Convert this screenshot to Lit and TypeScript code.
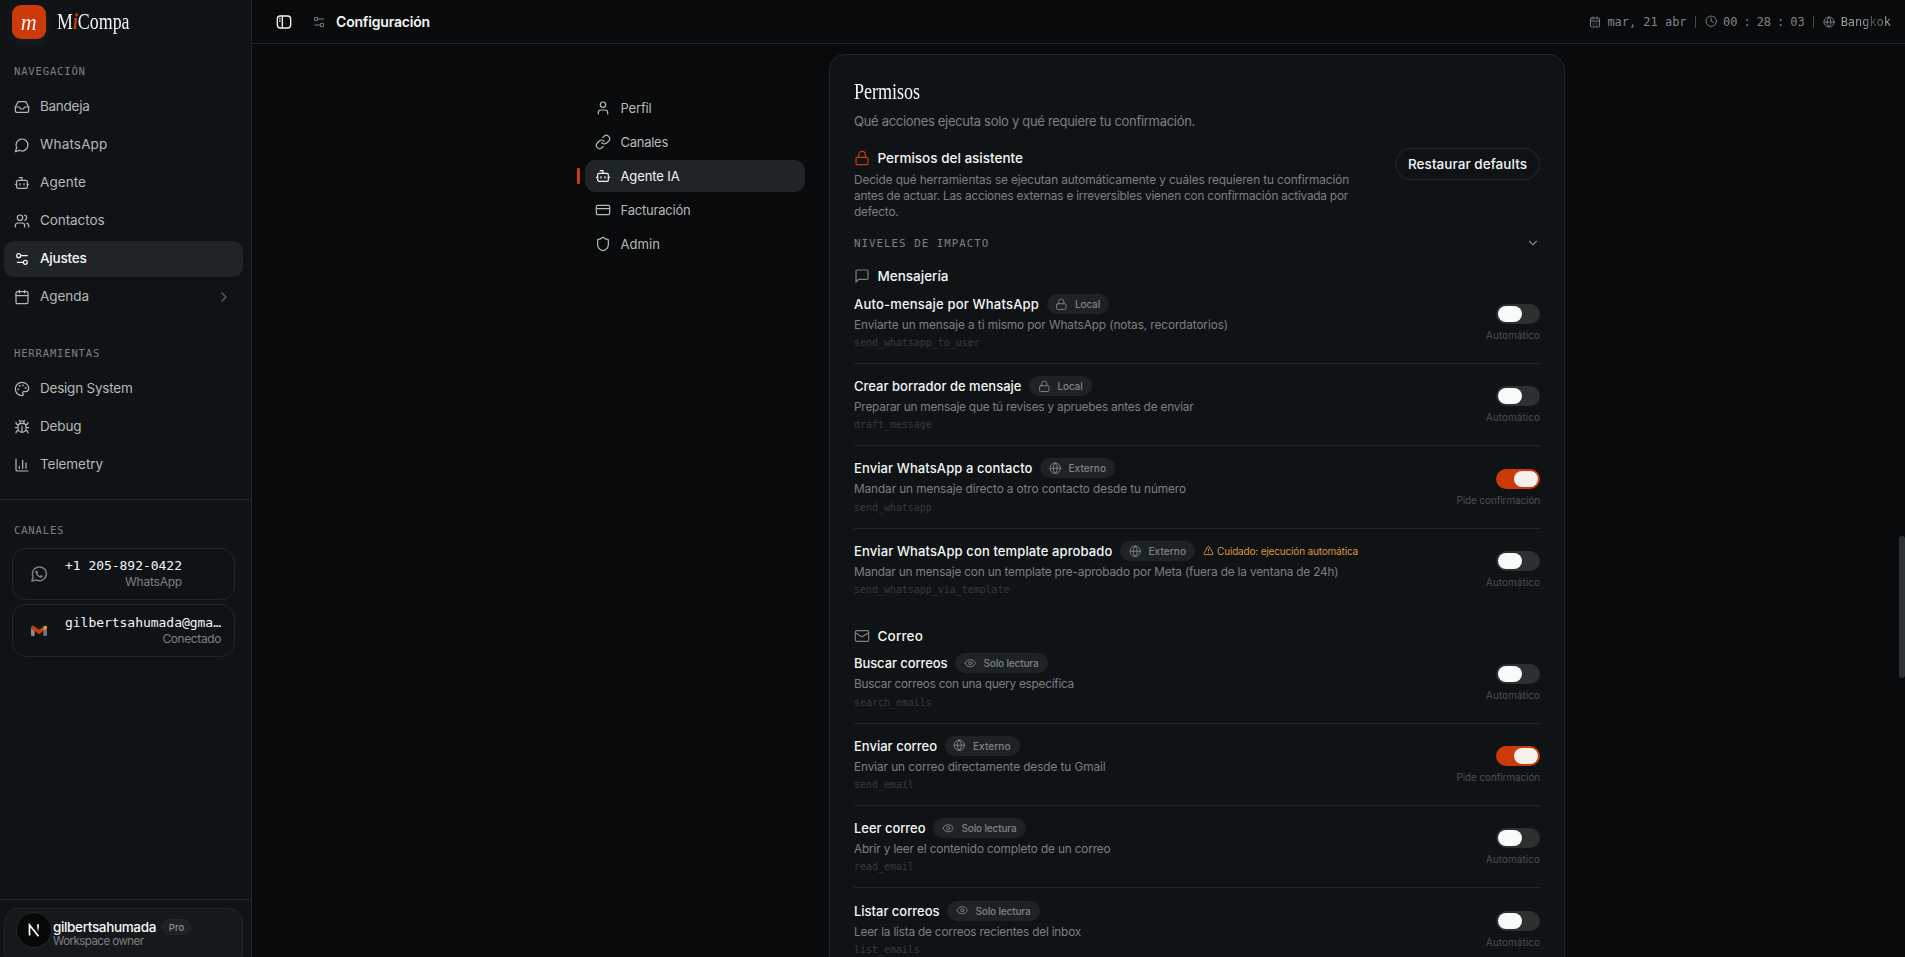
import { LitElement, html, css, svg, nothing } from 'lit';
import { customElement, property } from 'lit/decorators.js';

const icons: Record<string, unknown> = {
  inbox: svg`<path d="M22 12h-6l-2 3h-4l-2-3H2"/><path d="M5.45 5.11 2 12v6a2 2 0 0 0 2 2h16a2 2 0 0 0 2-2v-6l-3.45-6.89A2 2 0 0 0 16.76 4H7.24a2 2 0 0 0-1.79 1.11z"/>`,
  chat: svg`<path d="M7.9 20A9 9 0 1 0 4 16.1L2 22Z"/>`,
  bot: svg`<path d="M12 8V4H8"/><rect width="16" height="12" x="4" y="8" rx="2"/><path d="M2 14h2M20 14h2M15 13v2M9 13v2"/>`,
  users: svg`<path d="M16 21v-2a4 4 0 0 0-4-4H6a4 4 0 0 0-4 4v2"/><circle cx="9" cy="7" r="4"/><path d="M22 21v-2a4 4 0 0 0-3-3.87M16 3.13a4 4 0 0 1 0 7.75"/>`,
  sliders: svg`<path d="M20 7h-9M14 17H5"/><circle cx="17" cy="17" r="3"/><circle cx="7" cy="7" r="3"/>`,
  calendar: svg`<path d="M8 2v4M16 2v4M3 10h18"/><rect width="18" height="18" x="3" y="4" rx="2"/>`,
  calendarDays: svg`<path d="M8 2v4M16 2v4M3 10h18M8 14h.01M12 14h.01M16 14h.01M8 18h.01M12 18h.01M16 18h.01"/><rect width="18" height="18" x="3" y="4" rx="2"/>`,
  palette: svg`<path d="M12 22a1 1 0 0 1 0-20 10 9 0 0 1 10 9 5 5 0 0 1-5 5h-2.25a1.75 1.75 0 0 0-1.4 2.8l.3.4a1.75 1.75 0 0 1-1.4 2.8z"/><circle cx="13.5" cy="6.5" r=".5"/><circle cx="17.5" cy="10.5" r=".5"/><circle cx="6.5" cy="12.5" r=".5"/><circle cx="8.5" cy="7.5" r=".5"/>`,
  bug: svg`<path d="M12 20v-9M14 7a4 4 0 0 1 4 4v3a6 6 0 0 1-12 0v-3a4 4 0 0 1 4-4zM14.12 3.88 16 2M21 21a4 4 0 0 0-3.81-4M21 5a4 4 0 0 1-3.55 3.97M22 13h-4M3 21a4 4 0 0 1 3.81-4M3 5a4 4 0 0 0 3.55 3.97M6 13H2M8 2l1.88 1.88M9 7.13V6a3 3 0 1 1 6 0v1.13"/>`,
  chart: svg`<path d="M3 3v16a2 2 0 0 0 2 2h16M18 17V9M13 17V5M8 17v-3"/>`,
  right: svg`<path d="m9 18 6-6-6-6"/>`,
  down: svg`<path d="m6 9 6 6 6-6"/>`,
  user: svg`<path d="M19 21v-2a4 4 0 0 0-4-4H9a4 4 0 0 0-4 4v2"/><circle cx="12" cy="7" r="4"/>`,
  link: svg`<path d="M10 13a5 5 0 0 0 7.54.54l3-3a5 5 0 0 0-7.07-7.07l-1.72 1.71"/><path d="M14 11a5 5 0 0 0-7.54-.54l-3 3a5 5 0 0 0 7.07 7.07l1.71-1.71"/>`,
  card: svg`<rect width="20" height="14" x="2" y="5" rx="2"/><path d="M2 10h20"/>`,
  shield: svg`<path d="M20 13c0 5-3.5 7.5-7.66 8.95a1 1 0 0 1-.67-.01C7.5 20.5 4 18 4 13V6a1 1 0 0 1 1-1c2 0 4.5-1.2 6.24-2.72a1.17 1.17 0 0 1 1.52 0C14.51 3.81 17 5 19 5a1 1 0 0 1 1 1z"/>`,
  lock: svg`<rect width="18" height="11" x="3" y="11" rx="2"/><path d="M7 11V7a5 5 0 0 1 10 0v4"/>`,
  square: svg`<path d="M21 15a2 2 0 0 1-2 2H7l-4 4V5a2 2 0 0 1 2-2h14a2 2 0 0 1 2 2z"/>`,
  mail: svg`<rect width="20" height="16" x="2" y="4" rx="2"/><path d="m22 7-8.97 5.7a1.94 1.94 0 0 1-2.06 0L2 7"/>`,
  eye: svg`<path d="M2.06 12.35a1 1 0 0 1 0-.7 10.75 10.75 0 0 1 19.88 0 1 1 0 0 1 0 .7 10.75 10.75 0 0 1-19.88 0"/><circle cx="12" cy="12" r="3"/>`,
  globe: svg`<circle cx="12" cy="12" r="10"/><path d="M12 2a14.5 14.5 0 0 0 0 20 14.5 14.5 0 0 0 0-20M2 12h20"/>`,
  clock: svg`<circle cx="12" cy="12" r="10"/><path d="M12 6v6l4 2"/>`,
  alert: svg`<path d="m21.73 18-8-14a2 2 0 0 0-3.48 0l-8 14A2 2 0 0 0 4 21h16a2 2 0 0 0 1.73-3M12 9v4M12 17h.01"/>`,
  panel: svg`<rect width="20" height="18" x="2" y="3" rx="4.5"/><path d="M9.5 3v18M5.5 7h.6M5.5 10.5h.6"/>`,
};

const icon = (name: string, size = 16, stroke = 1.8) => html`<svg
  width=${size} height=${size} viewBox="0 0 24 24" fill="none" stroke="currentColor"
  stroke-width=${stroke} stroke-linecap="round" stroke-linejoin="round">${icons[name]}</svg>`;

/** Single line of text tracked so that it occupies a given width. */
@customElement('fit-text')
class FitText extends LitElement {
  @property({ type: Number }) w = 0;
  @property() text = '';
  static styles = css`
    :host { display: inline-block; white-space: pre; }
  `;
  updated() {
    const span = this.renderRoot.querySelector('span')!;
    span.style.letterSpacing = '0px';
    const natural = span.getBoundingClientRect().width;
    span.style.letterSpacing = `${(this.w - natural) / this.text.length}px`;
  }
  render() {
    return html`<span>${this.text}</span>`;
  }
}

const fit = (text: string, w: number) => html`<fit-text .text=${text} .w=${w}></fit-text>`;

type Entry = [string, string, number];
const nav: Entry[] = [
  ['inbox', 'Bandeja', 49.5], ['chat', 'WhatsApp', 67.5], ['bot', 'Agente', 46],
  ['users', 'Contactos', 64.5], ['sliders', 'Ajustes', 46.5], ['calendar', 'Agenda', 49],
];
const tools: Entry[] = [['palette', 'Design System', 92.5], ['bug', 'Debug', 41.5], ['chart', 'Telemetry', 63]];
const sections: Entry[] = [
  ['user', 'Perfil', 31], ['link', 'Canales', 47.5], ['bot', 'Agente IA', 59],
  ['card', 'Facturación', 70], ['shield', 'Admin', 39.5],
];

const levels: Record<string, Entry> = {
  local: ['lock', 'Local', 25], ext: ['globe', 'Externo', 37.5], read: ['eye', 'Solo lectura', 55],
};

interface Tool { t: string; tw: number; lvl: string; d: string; dw: number; code: string; on?: boolean; warn?: boolean }
interface Group { icon: string; name: string; w: number; tools: Tool[] }
const groups: Group[] = [
  { icon: 'square', name: 'Mensajería', w: 71, tools: [
    { t: 'Auto-mensaje por WhatsApp', tw: 185, lvl: 'local', d: 'Enviarte un mensaje a ti mismo por WhatsApp (notas, recordatorios)', dw: 374, code: 'send_whatsapp_to_user' },
    { t: 'Crear borrador de mensaje', tw: 167.5, lvl: 'local', d: 'Preparar un mensaje que tú revises y apruebes antes de enviar', dw: 339.5, code: 'draft_message' },
    { t: 'Enviar WhatsApp a contacto', tw: 178.5, lvl: 'ext', d: 'Mandar un mensaje directo a otro contacto desde tu número', dw: 332, code: 'send_whatsapp', on: true },
    { t: 'Enviar WhatsApp con template aprobado', tw: 258.5, lvl: 'ext', d: 'Mandar un mensaje con un template pre-aprobado por Meta (fuera de la ventana de 24h)', dw: 484.5, code: 'send_whatsapp_via_template', warn: true },
  ] },
  { icon: 'mail', name: 'Correo', w: 45.5, tools: [
    { t: 'Buscar correos', tw: 93.5, lvl: 'read', d: 'Buscar correos con una query específica', dw: 220, code: 'search_emails' },
    { t: 'Enviar correo', tw: 83, lvl: 'ext', d: 'Enviar un correo directamente desde tu Gmail', dw: 251.5, code: 'send_email', on: true },
    { t: 'Leer correo', tw: 71.5, lvl: 'read', d: 'Abrir y leer el contenido completo de un correo', dw: 256.5, code: 'read_email' },
    { t: 'Listar correos', tw: 85.5, lvl: 'read', d: 'Leer la lista de correos recientes del inbox', dw: 227, code: 'list_emails' },
  ] },
];

@customElement('app-root')
class AppRoot extends LitElement {
  static styles = css`
    :host { display: block; height: 957px; overflow: hidden; background: #090a0c; color: #f4f6f5;
      font-family: Inter, "Liberation Sans", sans-serif; font-size: 13.5px; }
    * { box-sizing: border-box; }
    svg { display: block; flex: none; }
    .app { display: flex; height: 957px; }
    .mono { font-family: "DejaVu Sans Mono", monospace; }
    .serif { font-family: "Liberation Serif", serif; transform-origin: left center; white-space: nowrap; }

    .side { width: 252px; flex: none; background: #0f1315; border-right: 1px solid #212527; display: flex; flex-direction: column; }
    .brand { height: 44px; padding: 0 12px; display: flex; align-items: center; gap: 11px; }
    .mark { width: 34px; height: 34px; border-radius: 9px; background: #cc3a0a; box-shadow: 0 4px 12px rgba(255,255,255,.05);
      display: flex; align-items: center; justify-content: center; font: italic 24px/34px "Liberation Serif", serif; padding-bottom: 1px; }
    .mark span { transform: scaleX(.92); }
    .word { font-size: 24px; line-height: 34px; transform: scaleX(.745); padding-bottom: 3px; }
    .word i { color: #cc3a0a; font-weight: bold; }
    .label { padding-left: 14px; font-size: 10.6px; letter-spacing: .8px; color: #7b8081; line-height: 16px; }
    .nav { display: flex; flex-direction: column; gap: 2px; padding: 0 8px 0 4px; color: #b4b9b9; }
    .item { height: 36px; border-radius: 10px; padding: 0 11px 0 10px; display: flex; align-items: center; gap: 10px; }
    .item fit-text { padding-bottom: 2px; }
    .item .end { margin-left: auto; color: #5c6162; }
    .active { background: #1f2426; color: #f4f6f5; }
    .item.active { font-weight: 500; }
    .l1 { margin-top: 19px; margin-bottom: 10px; }
    .l2 { margin-top: 30px; margin-bottom: 10px; }
    .l3 { border-top: 1px solid #212527; margin-top: 16px; padding-top: 22px; margin-bottom: 10px; }
    .chs { padding: 0 16px 0 12px; display: flex; flex-direction: column; gap: 4px; }
    .ch { height: 52px; border: 1px solid #212527; border-radius: 14px; padding: 0 12px 0 18px; display: flex; align-items: center; gap: 18px; color: #7b8081; font-size: 12px; }
    .ch + .ch { height: 53px; }
    .ch div { display: flex; flex-direction: column; align-items: flex-end; line-height: 16px; }
    .ch .mono { font-size: 13px; color: #f4f6f5; letter-spacing: -.03px; }
    .foot { margin-top: auto; height: 58px; border-top: 1px solid #212527; padding: 8px 8px 0 4px; }
    .me { height: 60px; border: 1px solid #212527; border-radius: 14px; background: #15191b; padding: 3px 0 0 11px; display: flex; align-items: flex-start; gap: 1px; }
    .ava { width: 36px; height: 36px; border-radius: 50%; background: #070808; border: 1px solid #25292b; display: flex; align-items: center; justify-content: center; }
    .who { padding-top: 7px; font-weight: 500; line-height: 16px; }
    .who .top { display: flex; align-items: center; gap: 6px; height: 16px; }
    .pro { height: 16px; width: 29px; border: 1px solid #25292b; background: #1d2123; border-radius: 8px; font-size: 9.5px; color: #8b9090; line-height: 15px; text-align: center; }
    .who .sub { font-size: 11.5px; color: #7b8081; font-weight: 400; line-height: 13px; }

    .main { flex: 1; min-width: 0; display: flex; flex-direction: column; }
    .bar { height: 44px; flex: none; border-bottom: 1px solid #212527; display: flex; align-items: center; padding: 0 14px 0 24px; }
    .bar .cfg { margin: 0 10px 0 20px; color: #7b8081; }
    .bar b { font-weight: 600; font-size: 14px; }
    .clock { margin-left: auto; display: flex; align-items: center; font-size: 12px; color: #7f8586; gap: 6px; letter-spacing: -.03px; }
    .clock .sep { width: 1px; height: 12px; background: #454b4c; margin: 0 2.5px; }
    .zone { color: transparent; background: linear-gradient(90deg, #9ba0a0 45%, #4e5455 62%, #4e5455 70%, #9ba0a0 90%); background-clip: text; -webkit-background-clip: text; }

    .scroll { flex: 1; min-height: 0; overflow: hidden; position: relative; display: flex; justify-content: center; align-items: flex-start; gap: 24px; padding: 10px 15px 0 0; }
    .thumb { position: absolute; right: 0; top: 492px; width: 6px; height: 142px; border-radius: 3px; background: #2b3233; }
    .tabs { width: 229px; padding: 38px 0 0 0; margin-left: -1px; display: flex; flex-direction: column; gap: 2px; color: #b4b9b9; font-size: 13px; }
    .tabrow { display: flex; align-items: center; gap: 5px; }
    .tick { width: 3px; height: 16px; border-radius: 1px; margin-left: 1px; }
    .tick.on { background: #cc3a0a; }
    .tab { width: 220px; height: 32px; border-radius: 10px; display: flex; align-items: center; gap: 9.5px; padding: 0 10px; }
    .card { width: 736px; border: 1px solid #212527; border-radius: 16px; background: #0f1315; padding: 22px 24px; height: 1100px; }
    .h { font-size: 24px; line-height: 28px; transform: scaleX(.75); }
    .lead { color: #7b8081; font-size: 13px; line-height: 20px; margin-top: 6px; }
    .intro { display: flex; justify-content: space-between; margin-top: 17px; }
    .ttl { display: flex; align-items: center; gap: 7.5px; font-weight: 500; height: 20px; }
    .ttl svg { color: #7b8081; }
    .ttl.hot svg { color: #cc3a0a; }
    .para { color: #7b8081; font-size: 11.8px; margin-top: 4px; }
    .para div { height: 16px; line-height: 16px; }
    .btn { width: 145px; height: 32px; border-radius: 16px; border: 1px solid #25292b; display: flex; align-items: center; justify-content: center; font-weight: 500; }
    .imp { display: flex; justify-content: space-between; align-items: center; height: 16px; margin-top: 15px; color: #7b8081; font-size: 10.8px; letter-spacing: 1.02px; }
    .grp { margin-top: 15px; }
    .grp + .grp { margin-top: 27px; }
    .rows { margin-top: 8px; }
    .row { display: flex; align-items: center; justify-content: space-between; height: 82.4px; border-bottom: 1px solid #212527; }
    .row:first-child { height: 70px; padding-bottom: 12px; }
    .row:last-child { border: 0; height: 69.8px; padding-top: 12px; }
    .name { display: flex; align-items: center; gap: 8px; height: 20px; font-size: 13px; font-weight: 500; }
    .pill { height: 20px; border-radius: 10px; background: #1d2224; padding: 0 9px 0 8.5px; margin-left: -.5px; display: flex; align-items: center; gap: 7.5px; font-size: 10px; color: #7f8485; }
    .warn { display: flex; align-items: center; gap: 3px; color: #d9953b; font-size: 10px; font-weight: 400; }
    .desc { color: #7b8081; font-size: 11.8px; line-height: 19.4px; margin-top: 2px; }
    .code { color: #363b3c; font-size: 9.95px; line-height: 16px; height: 16px; }
    .ctl { display: flex; flex-direction: column; align-items: flex-end; gap: 4px; font-size: 9.8px; color: #4c5152; line-height: 15px; padding-top: 2px; }
    .tog { width: 44px; height: 20px; border-radius: 10px; background: #2b3031; padding: 2px; display: flex; }
    .tog span { width: 24px; height: 16px; border-radius: 8px; background: #f8faf9; }
    .tog.on { background: #cc3a0a; justify-content: flex-end; }
    .tog.on span { background: #f5f0ec; }
  `;

  navItem([ic, text, w]: Entry) {
    return html`<div class="item ${text === 'Ajustes' ? 'active' : ''}">
      ${icon(ic)}${fit(text, w)}
      ${text === 'Agenda' ? html`<span class="end">${icon('right', 16)}</span>` : nothing}
    </div>`;
  }

  row(r: Tool) {
    const [ic, label, w] = levels[r.lvl];
    return html`<div class="row">
      <div>
        <div class="name">${fit(r.t, r.tw)}
          <span class="pill">${icon(ic, 12.5)}${fit(label, w)}</span>
          ${r.warn ? html`<span class="warn">${icon('alert', 11, 2)}${fit('Cuidado: ejecución automática', 141)}</span>` : nothing}
        </div>
        <div class="desc">${fit(r.d, r.dw)}</div>
        <div class="code mono">${r.code}</div>
      </div>
      <div class="ctl">
        <div class="tog ${r.on ? 'on' : ''}"><span></span></div>
        ${r.on ? fit('Pide confirmación', 83.5) : fit('Automático', 54)}
      </div>
    </div>`;
  }

  render() {
    return html`<div class="app">
      <aside class="side">
        <div class="brand"><div class="mark"><span>m</span></div><div class="word serif">M<i>i</i>Compa</div></div>
        <div class="label mono l1">NAVEGACIÓN</div>
        <div class="nav">${nav.map((n) => this.navItem(n))}</div>
        <div class="label mono l2">HERRAMIENTAS</div>
        <div class="nav">${tools.map((n) => this.navItem(n))}</div>
        <div class="label mono l3">CANALES</div>
        <div class="chs">
          <div class="ch">
            <svg width="16" height="16" viewBox="0 0 24 24" fill="none" stroke="currentColor" stroke-width="2.2" stroke-linejoin="round"><path d="M3.2 16.2A10.4 10.4 0 1 1 7.6 20.9L1.4 22.6Z"/><path fill="currentColor" stroke="none" d="M8.5 6.6c-.6 0-1.9 1-1.9 2.9 0 3.3 4.4 8 8 8 1.9 0 2.9-1.2 2.9-2.3 0-.6-2.3-1.7-2.8-1.7s-1 1.4-1.5 1.4c-.8 0-3.5-2.4-3.5-3.2 0-.5 1-1 1-1.6S9.5 6.6 8.5 6.6z"/></svg>
            <div><span class="mono">+1 205-892-0422</span>${fit('WhatsApp', 57)}</div>
          </div>
          <div class="ch">
            <svg width="16" height="12" viewBox="0 0 16 12"><path fill="#8b9090" d="M0 3l3.6 2.7V11H1a1 1 0 0 1-1-1z"/><path fill="#6e7374" d="M16 3l-3.6 2.7V11H15a1 1 0 0 0 1-1z"/><path fill="#cc3a0a" d="M0 2.6C0 .8 1.8.2 3.2 1.2L8 4.8l4.4-3.3v4.4L8 9.2 0 3.3z"/><path fill="#d9a04a" d="M12.4 1.5C14 .2 16 .8 16 2.6v.7l-3.6 2.6z"/></svg>
            <div><span class="mono">gilbertsahumada@gma…</span>${fit('Conectado', 58.5)}</div>
          </div>
        </div>
        <div class="foot"><div class="me">
          <div class="ava"><svg width="14" height="14" viewBox="0 0 14 14"><defs><linearGradient id="n" x2="0" y2="1"><stop offset=".3" stop-color="#fff"/><stop offset="1" stop-color="#fff" stop-opacity="0"/></linearGradient></defs><path d="M2.5 12.5V2L11.5 13.3" fill="none" stroke="#fff" stroke-width="1.7"/><path d="M10.2 1.2h1.7v8h-1.7z" fill="url(#n)"/></svg></div>
          <div class="who">
            <div class="top">${fit('gilbertsahumada', 103)}<span class="pro">Pro</span></div>
            <div class="sub">${fit('Workspace owner', 90.5)}</div>
          </div>
        </div></div>
      </aside>
      <main class="main">
        <header class="bar">
          ${icon('panel', 16, 2)}<span class="cfg">${icon('sliders', 14)}</span><b>${fit('Configuración', 94)}</b>
          <div class="clock mono">
            ${icon('calendarDays', 12)}<span>mar, 21 abr</span><span class="sep"></span>
            ${icon('clock', 12.5)}<span>00</span><span>:</span><span>28</span><span>:</span><span>03</span><span class="sep"></span>
            ${icon('globe', 12)}<span class="zone">Bangkok</span>
          </div>
        </header>
        <div class="scroll">
          <nav class="tabs">${sections.map(([ic, t, w]) => html`<div class="tabrow">
            <span class="tick ${t === 'Agente IA' ? 'on' : ''}"></span>
            <div class="tab ${t === 'Agente IA' ? 'active' : ''}">${icon(ic)}${fit(t, w)}</div>
          </div>`)}</nav>
          <section class="card">
            <div class="h serif">Permisos</div>
            <div class="lead">${fit('Qué acciones ejecuta solo y qué requiere tu confirmación.', 341)}</div>
            <div class="intro">
              <div>
                <div class="ttl hot">${icon('lock', 16)}${fit('Permisos del asistente', 145.5)}</div>
                <div class="para">
                  <div>${fit('Decide qué herramientas se ejecutan automáticamente y cuáles requieren tu confirmación', 495)}</div>
                  <div>${fit('antes de actuar. Las acciones externas e irreversibles vienen con confirmación activada por', 494)}</div>
                  <div>${fit('defecto.', 44.5)}</div>
                </div>
              </div>
              <div class="btn">${fit('Restaurar defaults', 119)}</div>
            </div>
            <div class="imp mono"><span>NIVELES DE IMPACTO</span>${icon('down', 14, 2)}</div>
            ${groups.map((g) => html`<div class="grp">
              <div class="ttl">${icon(g.icon)}${fit(g.name, g.w)}</div>
              <div class="rows">${g.tools.map((r) => this.row(r))}</div>
            </div>`)}
          </section>
          <div class="thumb"></div>
        </div>
      </main>
    </div>`;
  }
}
